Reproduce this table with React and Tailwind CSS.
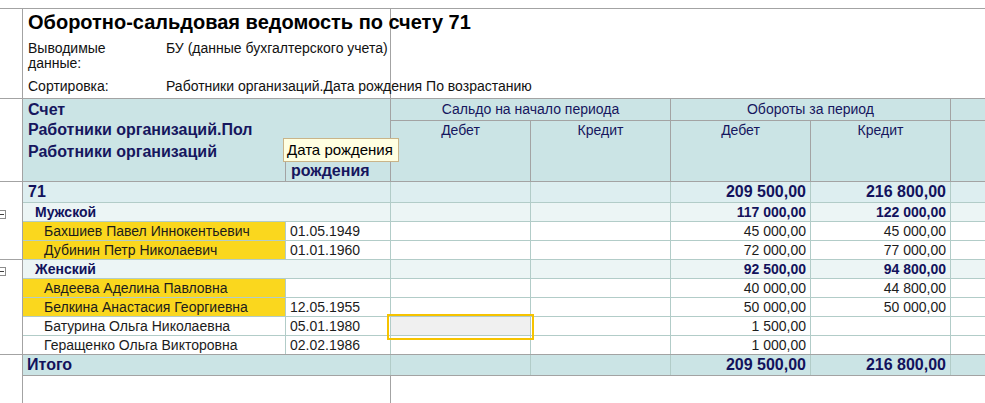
import React from "react";

const groups = [
  {
    name: "Мужской",
    d: "117 000,00",
    k: "122 000,00",
    rows: [
      { name: "Бахшиев Павел Иннокентьевич", date: "01.05.1949", d: "45 000,00", k: "45 000,00", hl: true },
      { name: "Дубинин Петр Николаевич", date: "01.01.1960", d: "72 000,00", k: "77 000,00", hl: true, gutterLine: true },
    ],
  },
  {
    name: "Женский",
    d: "92 500,00",
    k: "94 800,00",
    rows: [
      { name: "Авдеева Аделина Павловна", date: "", d: "40 000,00", k: "44 800,00", hl: true },
      { name: "Белкина Анастасия Георгиевна", date: "12.05.1955", d: "50 000,00", k: "50 000,00", hl: true },
      { name: "Батурина Ольга Николаевна", date: "05.01.1980", d: "1 500,00", k: "", sel: true },
      { name: "Геращенко Ольга Викторовна", date: "02.02.1986", d: "1 000,00", k: "", last: true },
    ],
  },
];

// four money columns + the cut-off column on the right
function Money({ d, k, sel }) {
  return (
    <>
      <div className="relative w-[140px] shrink-0 border-r border-[#b2ccc8]">
        {sel && (
          <>
            <div className="absolute inset-0 bg-[#f0f0f0]" />
            <div className="absolute left-[-4px] top-[-3px] w-[147px] h-[26px] border-2 border-[#f6c300] z-10" />
          </>
        )}
      </div>
      <div className="w-[140px] shrink-0 border-r border-[#b2ccc8]" />
      <div className="w-[140px] shrink-0 border-r border-[#b2ccc8] text-right pr-[4px]">{d}</div>
      <div className="w-[140px] shrink-0 border-r border-[#b2ccc8] text-right pr-[4px]">{k}</div>
      <div className="flex-1" />
    </>
  );
}

function Toggle() {
  return (
    <div className="ml-[-3px] mt-[3px] w-[9px] h-[9px] border border-[#8c8c8c] bg-white flex items-center justify-center">
      <div className="w-[5px] h-px bg-[#404040]" />
    </div>
  );
}

function GroupRow({ g }) {
  return (
    <div className="flex h-[19px]">
      <div className="w-[23px] shrink-0 border-r border-[#a3a3a3] flex items-center">
        <Toggle />
      </div>
      <div className="flex flex-1 border-b border-[#b2ccc8] bg-[#ecf5f5] font-bold text-[14px] leading-[18px] text-[#12125c]">
        <div className="w-[368px] shrink-0 border-r border-[#b2ccc8] pl-[12px]">{g.name}</div>
        <Money d={g.d} k={g.k} />
      </div>
    </div>
  );
}

function PersonRow({ r }) {
  return (
    <div className={`flex ${r.last ? "h-[18px]" : "h-[19px]"}`}>
      <div
        className={`w-[23px] shrink-0 border-r border-[#a3a3a3] ${r.gutterLine ? "border-b" : ""}`}
      />
      <div
        className={`flex flex-1 ${r.last ? "" : "border-b"} border-[#b2ccc8] bg-white text-[14px] leading-[18px] text-[#1c1c1c]`}
      >
        <div
          className={`w-[263px] shrink-0 border-r border-[#b2ccc8] pl-[21px] whitespace-nowrap ${r.hl ? "bg-[#fad71e]" : ""}`}
        >
          {r.name}
        </div>
        <div className="w-[105px] shrink-0 border-r border-[#b2ccc8] pl-[4px]">{r.date}</div>
        <Money d={r.d} k={r.k} sel={r.sel} />
      </div>
    </div>
  );
}

export default function App() {
  return (
    <div className="w-[985px] h-[403px] overflow-hidden bg-white font-['Liberation_Sans',Arial,sans-serif] flex flex-col">
      {/* top strip */}
      <div className="h-[9px] shrink-0 border-b border-[#a3a3a3]" />

      {/* report title + parameters */}
      <div className="flex h-[90px] shrink-0 border-b border-[#a3a3a3]">
        <div className="w-[23px] shrink-0 border-r border-[#a3a3a3]" />
        <div className="w-[368px] shrink-0 border-r border-[#a3a3a3] pl-[5px] whitespace-nowrap text-black">
          <div className="h-[27px] leading-[27px] text-[20px] font-bold">
            Оборотно-сальдовая ведомость по счету 71
          </div>
          <div className="mt-[5px] flex text-[14px] leading-[15px] text-[#111]">
            <div className="w-[138px] shrink-0">
              Выводимые
              <br />
              данные:
            </div>
            <div>БУ (данные бухгалтерского учета)</div>
          </div>
          <div className="mt-[8px] flex text-[14px] leading-[14px] text-[#111]">
            <div className="w-[138px] shrink-0">Сортировка:</div>
            <div>Работники организаций.Дата рождения По возрастанию</div>
          </div>
        </div>
        <div className="flex-1" />
      </div>

      {/* column header */}
      <div className="flex h-[83px] shrink-0 border-b border-[#a3a3a3]">
        <div className="w-[23px] shrink-0 border-r border-[#a3a3a3]" />
        <div className="flex flex-1 bg-[#cbe4e5] text-[#16165e]">
          <div className="w-[368px] shrink-0 border-r border-[#a3a3a3] flex flex-col font-bold text-[16px]">
            <div className="h-[21px] leading-[21px] pl-[5px]">Счет</div>
            <div className="h-[21px] leading-[20px] pl-[5px]">Работники организаций.Пол</div>
            <div className="flex flex-1">
              <div className="w-[262px] shrink-0 pl-[5px] leading-[22px]">Работники организаций</div>
              <div className="relative flex-1 border-l border-[#a3a3a3] pl-[5px] leading-[20px]">
                Дата
                <br />
                рождения
                <div className="absolute left-[-3px] top-[-3px] w-[116px] h-[24px] bg-[#ffffe1] border border-[#c9b489] pl-[3px] text-[15px] leading-[22px] font-normal text-black whitespace-nowrap z-20">
                  Дата рождения
                </div>
              </div>
            </div>
          </div>
          {["Сальдо на начало периода", "Обороты за период"].map((t) => (
            <div key={t} className="w-[280px] shrink-0 border-r border-[#a3a3a3] flex flex-col text-[14px]">
              <div className="h-[22px] border-b border-[#a3a3a3] text-center leading-[21px]">{t}</div>
              <div className="flex flex-1">
                <div className="w-[140px] shrink-0 border-r border-[#a3a3a3] text-center leading-[18px]">
                  Дебет
                </div>
                <div className="flex-1 text-center leading-[18px]">Кредит</div>
              </div>
            </div>
          ))}
          <div className="flex-1 flex flex-col">
            <div className="h-[22px] border-b border-[#a3a3a3]" />
          </div>
        </div>
      </div>

      {/* account row */}
      <div className="flex h-[21px] shrink-0">
        <div className="w-[23px] shrink-0 border-r border-[#a3a3a3]" />
        <div className="flex flex-1 border-b border-[#b2ccc8] bg-[#ddeef0] font-bold text-[16px] leading-[20px] text-[#12125c]">
          <div className="w-[368px] shrink-0 border-r border-[#b2ccc8] pl-[5px]">71</div>
          <Money d="209 500,00" k="216 800,00" />
        </div>
      </div>

      {groups.map((g) => (
        <React.Fragment key={g.name}>
          <GroupRow g={g} />
          {g.rows.map((r) => (
            <PersonRow key={r.name} r={r} />
          ))}
        </React.Fragment>
      ))}

      {/* total */}
      <div className="flex h-[22px] shrink-0 border-t border-[#a3a3a3]">
        <div className="w-[23px] shrink-0 border-r border-[#a3a3a3]" />
        <div className="flex flex-1 border-b border-[#a3a3a3] bg-[#cbe4e5] font-bold text-[16px] leading-[20px] text-[#12125c]">
          <div className="w-[368px] shrink-0 border-r border-[#b2ccc8] pl-[4px]">Итого</div>
          <Money d="209 500,00" k="216 800,00" />
        </div>
      </div>

      {/* empty space below */}
      <div className="flex flex-1">
        <div className="w-[23px] shrink-0 border-r border-[#a3a3a3]" />
        <div className="w-[368px] shrink-0 border-r border-[#a3a3a3]" />
        <div className="flex-1" />
      </div>
    </div>
  );
}
